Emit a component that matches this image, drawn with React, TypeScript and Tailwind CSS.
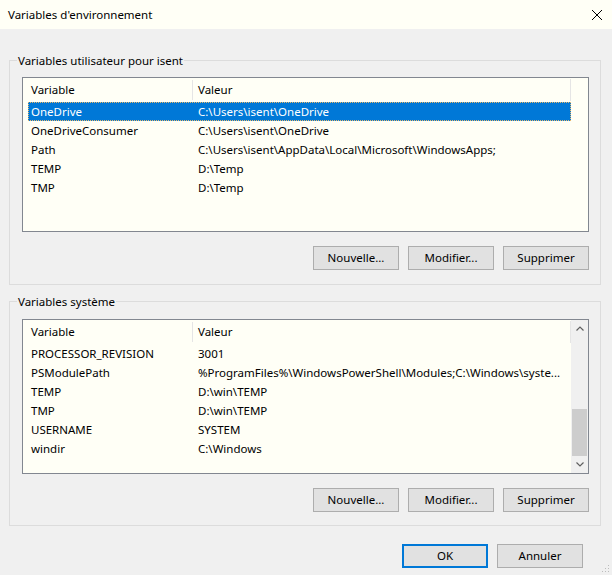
const userVars = [
  { name: "OneDrive", value: "C:\\Users\\isent\\OneDrive", selected: true },
  { name: "OneDriveConsumer", value: "C:\\Users\\isent\\OneDrive" },
  { name: "Path", value: "C:\\Users\\isent\\AppData\\Local\\Microsoft\\WindowsApps;" },
  { name: "TEMP", value: "D:\\Temp" },
  { name: "TMP", value: "D:\\Temp" },
];

const systemVars = [
  { name: "PROCESSOR_REVISION", value: "3001" },
  { name: "PSModulePath", value: "%ProgramFiles%\\WindowsPowerShell\\Modules;C:\\Windows\\syste..." },
  { name: "TEMP", value: "D:\\win\\TEMP" },
  { name: "TMP", value: "D:\\win\\TEMP" },
  { name: "USERNAME", value: "SYSTEM" },
  { name: "windir", value: "C:\\Windows" },
];

type Row = { name: string; value: string; selected?: boolean };

function Chevron({ up }: { up?: boolean }) {
  return (
    <svg width="8" height="5" viewBox="0 0 8 5" className="block">
      <path
        d={up ? "M0.5 4.5 L4 1 L7.5 4.5" : "M0.5 0.5 L4 4 L7.5 0.5"}
        fill="none"
        stroke="#606060"
        strokeWidth="1.2"
      />
    </svg>
  );
}

function VarList({ rows, scroll }: { rows: Row[]; scroll?: boolean }) {
  return (
    <div className="flex h-[155px] border border-[#828790] bg-[#fffff6]">
      <div className="flex-1 flex flex-col min-w-0">
        <div className="flex h-[24px] items-center shrink-0">
          <div className="w-[169px] pl-[8px]">Variable</div>
          <div className="w-px h-[20px] bg-[#e5e5e5]" />
          <div className="flex-1 pl-[5px]">Valeur</div>
          <div className="w-px h-[22px] bg-[#e5e5e5]" />
        </div>
        {rows.map((r) => (
          <div
            key={r.name}
            className={
              r.selected
                ? "flex h-[19px] items-center ml-[5px] bg-[#0078d7] text-white border border-dotted border-[#e8b86c]"
                : "flex h-[19px] items-center ml-[5px] border border-transparent"
            }
          >
            <div className="w-[166px] pl-[2px] whitespace-nowrap">{r.name}</div>
            <div className="flex-1 pl-[3px] whitespace-nowrap overflow-hidden">{r.value}</div>
          </div>
        ))}
      </div>
      {scroll ? (
        <div className="w-[17px] flex flex-col bg-[#f0f0f0]">
          <div className="h-[17px] flex items-center justify-center">
            <Chevron up />
          </div>
          <div className="flex-1 flex flex-col justify-end">
            <div className="h-[47px] mx-px bg-[#cdcdcd]" />
          </div>
          <div className="h-[17px] flex items-center justify-center">
            <Chevron />
          </div>
        </div>
      ) : (
        <div className="w-[17px]" />
      )}
    </div>
  );
}

function Btn({ label, primary }: { label: string; primary?: boolean }) {
  return (
    <button
      className={
        primary
          ? "w-[86px] h-[24px] bg-[#e1e1e1] border-2 border-[#0078d7] text-black"
          : "w-[86px] h-[24px] bg-[#e1e1e1] border border-[#adadad] text-black"
      }
    >
      {label}
    </button>
  );
}

function Group({
  title,
  rows,
  scroll,
  top,
  listTop,
  bottom,
}: {
  title: string;
  rows: Row[];
  scroll?: boolean;
  top: string;
  listTop: string;
  bottom: string;
}) {
  return (
    <fieldset className={`min-w-0 border border-[#dcdcdc] ${top}`}>
      <legend className="ml-[7px] px-[1px] leading-[15px]">{title}</legend>
      <div className={`pl-[12px] pr-[11px] ${listTop} ${bottom}`}>
        <VarList rows={rows} scroll={scroll} />
        <div className="flex justify-end gap-[9px] mt-[14px]">
          <Btn label="Nouvelle..." />
          <Btn label="Modifier..." />
          <Btn label="Supprimer" />
        </div>
      </div>
    </fieldset>
  );
}

export default function App() {
  return (
    <div
      className="relative w-[612px] h-[575px] bg-[#f0f0f0] text-[11.5px] text-black overflow-hidden"
      style={{ fontFamily: '"Noto Sans", "Liberation Sans", sans-serif' }}
    >
      <div className="h-[29px] bg-[#fffff6] flex items-center justify-between pl-[8px] pr-[10px]">
        <span>Variables d'environnement</span>
        <svg width="10" height="10" viewBox="0 0 10 10">
          <path d="M0 0 L10 10 M10 0 L0 10" stroke="#000" strokeWidth="1" />
        </svg>
      </div>
      <div className="pl-[9px] pr-[11px]">
        <Group
          title="Variables utilisateur pour isent"
          rows={userVars}
          top="mt-[24px]"
          listTop="pt-[9px]"
          bottom="pb-[14px]"
        />
        <Group
          title="Variables système"
          rows={systemVars}
          scroll
          top="mt-[9px]"
          listTop="pt-[10px]"
          bottom="pb-[13px]"
        />
        <div className="flex justify-end gap-[9px] mt-[18px] pr-[18px]">
          <Btn label="OK" primary />
          <Btn label="Annuler" />
        </div>
      </div>
      <svg width="8" height="8" viewBox="0 0 8 8" className="absolute right-[2px] bottom-[2px]">
        <rect x="6" y="0" width="1" height="1" fill="#bcbcbc" />
        <rect x="3" y="3" width="1" height="1" fill="#bcbcbc" />
        <rect x="6" y="3" width="1" height="1" fill="#bcbcbc" />
        <rect x="0" y="6" width="1" height="1" fill="#bcbcbc" />
        <rect x="3" y="6" width="1" height="1" fill="#bcbcbc" />
        <rect x="6" y="6" width="1" height="1" fill="#bcbcbc" />
      </svg>
    </div>
  );
}
